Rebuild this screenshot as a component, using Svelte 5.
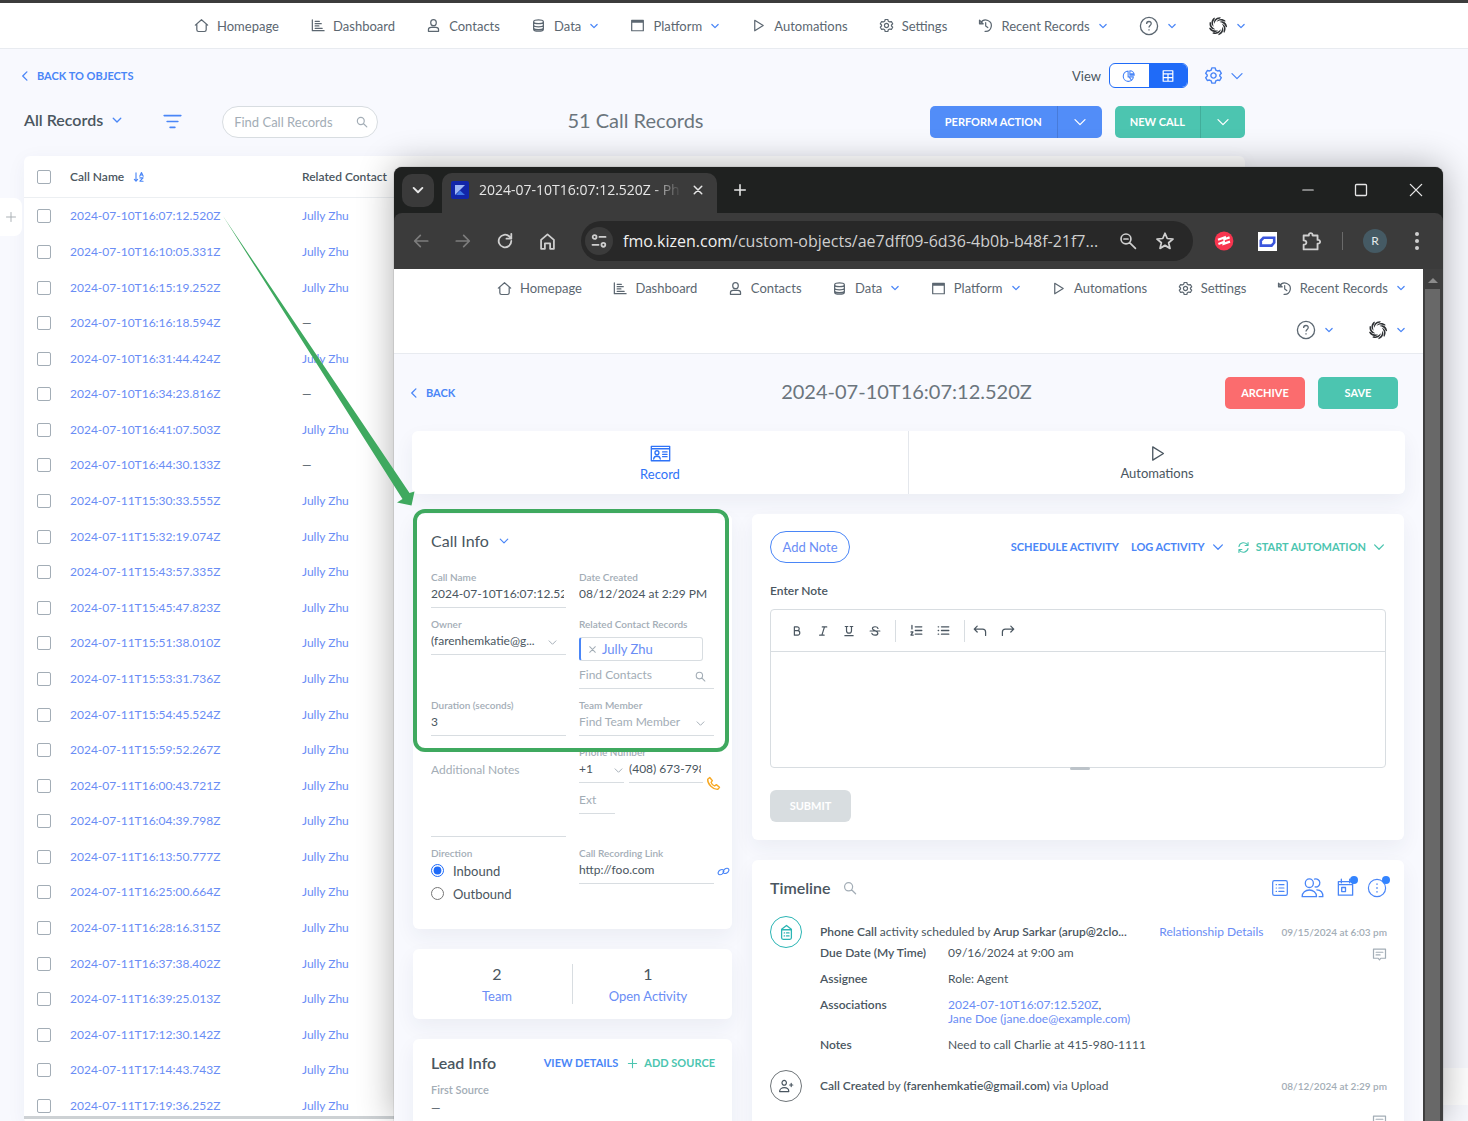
<!--
  @component CallRecords
  Call records list with the record detail opened in a separate browser
  window on top of it, plus the callout that links the two.
-->
<script lang="ts">
  type NavItem = { label: string; icon: string; menu?: boolean };

  const navItems: NavItem[] = [
    { label: 'Homepage', icon: 'home' },
    { label: 'Dashboard', icon: 'chart' },
    { label: 'Contacts', icon: 'person' },
    { label: 'Data', icon: 'data', menu: true },
    { label: 'Platform', icon: 'panel', menu: true },
    { label: 'Automations', icon: 'play' },
    { label: 'Settings', icon: 'gear' },
    { label: 'Recent Records', icon: 'history', menu: true }
  ];

  const contact = 'Jully Zhu';
  const records: [string, string][] = [
    ['2024-07-10T16:07:12.520Z', contact],
    ['2024-07-10T16:10:05.331Z', contact],
    ['2024-07-10T16:15:19.252Z', contact],
    ['2024-07-10T16:16:18.594Z', ''],
    ['2024-07-10T16:31:44.424Z', contact],
    ['2024-07-10T16:34:23.816Z', ''],
    ['2024-07-10T16:41:07.503Z', contact],
    ['2024-07-10T16:44:30.133Z', ''],
    ['2024-07-11T15:30:33.555Z', contact],
    ['2024-07-11T15:32:19.074Z', contact],
    ['2024-07-11T15:43:57.335Z', contact],
    ['2024-07-11T15:45:47.823Z', contact],
    ['2024-07-11T15:51:38.010Z', contact],
    ['2024-07-11T15:53:31.736Z', contact],
    ['2024-07-11T15:54:45.524Z', contact],
    ['2024-07-11T15:59:52.267Z', contact],
    ['2024-07-11T16:00:43.721Z', contact],
    ['2024-07-11T16:04:39.798Z', contact],
    ['2024-07-11T16:13:50.777Z', contact],
    ['2024-07-11T16:25:00.664Z', contact],
    ['2024-07-11T16:28:16.315Z', contact],
    ['2024-07-11T16:37:38.402Z', contact],
    ['2024-07-11T16:39:25.013Z', contact],
    ['2024-07-11T17:12:30.142Z', contact],
    ['2024-07-11T17:14:43.743Z', contact],
    ['2024-07-11T17:19:36.252Z', contact]
  ];

  // Stroke paths on a 16x16 grid
  const icons: Record<string, string> = {
    home: 'M1.4 7.6 8 1.8 14.6 7.6M3 6.6V12.6Q3 14.4 4.8 14.4H11.2Q13 14.4 13 12.6V6.6',
    chart: 'M2.5 2V13.5H15M5.5 3.5H10M5.5 6H12M5.5 8.5H9.5M5.5 11H13',
    person: 'M8 1.8A2.6 2.8 0 0 1 8 8.2 2.6 2.8 0 0 1 8 1.8ZM2.6 14.2V12.4C2.6 10.8 4 10 5.4 10H10.6C12 10 13.4 10.8 13.4 12.4V14.2Z',
    data: 'M2.8 4C2.8 1.4 13.2 1.4 13.2 4V12C13.2 14.8 2.8 14.8 2.8 12ZM2.8 4.6C4 6.6 12 6.6 13.2 4.6M2.8 8C4 10 12 10 13.2 8M2.8 11C4 12.8 12 12.8 13.2 11',
    panel: 'M1.8 2.6H14.2V13.6H1.8ZM1.8 3.4H14.2M1.8 4.4H14.2',
    play: 'M4 2.4 13 8 4 13.6Z',
    gear: 'M6.6 1.6H9.4L9.9 3.4 11.4 4.2 13.2 3.8 14.6 6.2 13.3 7.5V8.5L14.6 9.8 13.2 12.2 11.4 11.8 9.9 12.6 9.4 14.4H6.6L6.1 12.6 4.6 11.8 2.8 12.2 1.4 9.8 2.7 8.5V7.5L1.4 6.2 2.8 3.8 4.6 4.2 6.1 3.4ZM10.2 8A2.2 2.2 0 1 1 5.8 8 2.2 2.2 0 1 1 10.2 8Z',
    history: 'M1.6 2.2V6.2H5.6ZM3 5.2A6 6 0 1 1 7.5 14.2M8.2 5V8.6L10.4 10.2',
    down: 'M3 5.6 8 10.6 13 5.6',
    back: 'M10.5 2.5 5 8 10.5 13.5',
    search: 'M11 6.6A4.6 4.8 0 1 1 1.8 6.6 4.6 4.8 0 1 1 11 6.6ZM9.8 10 14.4 14.6',
    zoomOut: 'M10.6 6.2A4.4 4.4 0 1 1 1.8 6.2 4.4 4.4 0 1 1 10.6 6.2ZM9.4 9.4 14.6 14.6M4.4 6.2H8',
    left: 'M14 8H2.4M7.4 3 2.4 8 7.4 13',
    right: 'M2 8H13.6M8.6 3 13.6 8 8.6 13',
    reload: 'M13.6 8A5.6 5.6 0 1 1 11.9 4L13.6 5.8M13.6 1.6V5.9H9.3',
    house: 'M2.6 6.6 8 2 13.4 6.6V14.2H10.2V9.6H5.8V14.2H2.6Z',
    star: 'M8 1.8 9.8 6 14.4 6.4 10.9 9.4 12 13.9 8 11.5 4 13.9 5.1 9.4 1.6 6.4 6.2 6Z',
    puzzle: 'M2 3.4H6C5.6 1 9.2 1 8.8 3.4H12.6V6.8C15.2 6.4 15.2 10 12.6 9.6V14H2V10.4C4.8 10.6 4.8 7 2 7.2Z',
    tune: 'M5.8 4.4A1.7 1.7 0 1 1 2.4 4.4 1.7 1.7 0 1 1 5.8 4.4ZM8.4 4.4H13.8M13.6 11.4A1.7 1.7 0 1 1 10.2 11.4 1.7 1.7 0 1 1 13.6 11.4ZM2.2 11.4H7.6',
    close: 'M3 3 13 13M13 3 3 13',
    plus: 'M8 2V14M2 8H14',
    minimise: 'M2 8H14',
    maximise: 'M3.5 2.5H12.5Q13.5 2.5 13.5 3.5V12.5Q13.5 13.5 12.5 13.5H3.5Q2.5 13.5 2.5 12.5V3.5Q2.5 2.5 3.5 2.5Z',
    filter: 'M1 3H15M3.5 8H12.5M6 13H10',
    grid: 'M2.5 2H13.5V14H2.5ZM2.5 5.6H13.5M2.5 9.8H13.5M8 5.6V14',
    pie: 'M7 2.5A5.8 5.8 0 1 0 13 9H7ZM9 2V7H14A5 5 0 0 0 9 2ZM8 9 11 13M10 5.5H13',
    sort: 'M4 2.5V13.5M1.8 11.2 4 13.6 6.2 11.2M9 7 11.3 2 13.6 7M9.8 5.4H12.8M9.2 9.2H13.4L9.2 13.6H13.4',
    refresh: 'M2.4 6.8A5.8 5.8 0 0 1 13.2 5.2M13.6 2V5.6H10M13.6 9.2A5.8 5.8 0 0 1 2.8 10.8M2.4 14V10.4H6',
    card: 'M1 2.5H15V13.5H1ZM1 4.4H15M6.8 7.4A1.5 1.5 0 1 1 3.8 7.4 1.5 1.5 0 1 1 6.8 7.4ZM2.8 12.2C3 9.4 7.6 9.4 7.8 12.2M9.6 6.8H13M9.6 8.6H13M9.6 10.4H13',
    bold: 'M4.5 2.5H8.5C11.8 2.5 11.8 7.6 8.5 7.6H4.5ZM4.5 7.6H9C12.6 7.6 12.6 13.5 9 13.5H4.5Z',
    italic: 'M7 2.5H13M3.5 13.5H9.5M10 2.5 6.5 13.5',
    underline: 'M3 2H6.5M9.5 2H13M4.7 2V7.5C4.7 12 11.3 12 11.3 7.5V2M2.5 14.2H13.5',
    strike: 'M12 4.6C11 1.4 4.4 1.6 4.6 5 4.8 7.6 11.8 7.4 11.8 10.8 11.6 14.6 4.4 14.4 3.8 11M1.5 8H14.5',
    ordered: 'M6.5 3.5H14.5M6.5 8H14.5M6.5 12.5H14.5M2.4 1.8V6M1.2 9.8H3.6L1.2 13.6H4',
    bullets: 'M5.5 3.5H14.5M5.5 8H14.5M5.5 12.5H14.5M1.5 3.5H2M1.5 8H2M1.5 12.5H2',
    undo: 'M4.8 2.4 1.4 5.8 4.8 9.2M1.4 5.8H11Q14.4 5.8 14.4 9.2V13',
    redo: 'M11.2 2.4 14.6 5.8 11.2 9.2M14.6 5.8H5Q1.6 5.8 1.6 9.2V13',
    phone: 'M1.8 3.4 4 1.6 6.8 5 5.4 6.8C6 8.6 7.4 10 9.2 10.6L11 9.2 14.4 12 12.6 14.2C7.6 14.6 1.4 8.4 1.8 3.4Z',
    link: 'M7.4 9.8C5.6 13 .8 12.6 1.4 9.4 2 6.6 5.4 4.8 7.4 5.8 9 6.8 8.6 8.6 7.6 9.6M8.6 6.2C10.4 3 15.2 3.4 14.6 6.6 14 9.4 10.6 11.2 8.6 10.2 7 9.2 7.4 7.4 8.4 6.4',
    list: 'M3 1.5H13Q14.5 1.5 14.5 3V13Q14.5 14.5 13 14.5H3Q1.5 14.5 1.5 13V3Q1.5 1.5 3 1.5ZM4.6 5H4.9M7 5H11.5M4.6 8H4.9M7 8H11.5M4.6 11H4.9M7 11H11.5',
    people: 'M8.6 5A2.8 3 0 1 1 3 5 2.8 3 0 1 1 8.6 5ZM.8 14.4C.6 8.2 11 8.2 10.8 14.4ZM9.4 2.2A2.8 2.8 0 1 1 9.8 7.6M11 9.6C13.8 9.6 15.4 11.6 15.2 14.4H12.6',
    calendar: 'M2 3H14V14.5H2ZM2 5.6H14M4.5 1V4M11.5 1V4M4.8 8H8V11.4H4.8Z',
    clipboard: 'M3.4 5 8 1.4 12.6 5V13Q12.6 14.4 11.2 14.4H4.8Q3.4 14.4 3.4 13ZM3.6 5.4H12.4M5.8 8.4H6.2M8 8.4H10.4M5.8 11.2H6.2M8 11.2H10.4',
    comment: 'M1.6 2.2H14.4V12H9.4L8 13.8 6.6 12H1.6ZM4.4 5.6H11.6M4.4 8.4H8.6',
    addPerson: 'M8.4 4.8A2.2 2.4 0 1 1 4 4.8 2.2 2.4 0 1 1 8.4 4.8ZM1.6 13.6C1.6 8.4 10.8 8.4 10.8 13.6ZM13.2 5.4V8.6M11.6 7H14.8'
  };

  const actions = ['bold', 'italic', 'underline', 'strike'];
  const blades = [0, 40, 80, 120, 160, 200, 240, 280, 320];
</script>

{#snippet icon(name: string, size = 16, weight = 1.3)}
  <svg
    class="icon"
    width={size}
    height={size}
    viewBox="0 0 16 16"
    fill="none"
    stroke="currentColor"
    stroke-width={weight}
    stroke-linecap="round"
    stroke-linejoin="round"
    aria-hidden="true"
  >
    <path d={icons[name]} />
  </svg>
{/snippet}

{#snippet swirl()}
  <svg class="icon" width="20" height="20" viewBox="-10 -10 20 20" aria-hidden="true">
    {#each blades as angle}
      <path
        d="M-3.8 -2.2C-4.8 -5.6 -2 -9.2 2.6 -8.8 2.8 -8 2.2 -7.4 1.2 -7.2 -1.2 -6.8 -2.6 -5 -3.8 -2.2Z"
        fill="#2f3235"
        transform="rotate({angle})"
      />
    {/each}
  </svg>
{/snippet}

{#snippet help()}
  <button class="nav-item" aria-label="Help">
    <svg class="icon" width="20" height="20" viewBox="0 0 20 20" fill="none" stroke="currentColor" stroke-width="1.3">
      <circle cx="10" cy="10" r="8.6" />
      <path d="M7.6 8C7.6 4.6 12.4 4.8 12.2 7.8 12 9.6 10 9.6 10 11.6M10 13.2V14.6" />
    </svg>
    <span class="blue">{@render icon('down', 10, 2)}</span>
  </button>
{/snippet}

{#snippet account()}
  <button class="nav-item" aria-label="Account">
    {@render swirl()}
    <span class="blue">{@render icon('down', 10, 2)}</span>
  </button>
{/snippet}

{#snippet navLinks()}
  {#each navItems as item}
    <a class="nav-item" href="#{item.icon}">
      {@render icon(item.icon, 15, 1.3)}
      <span>{item.label}</span>
      {#if item.menu}
        <span class="blue">{@render icon('down', 10, 2)}</span>
      {/if}
    </a>
  {/each}
{/snippet}

<div class="desktop">
  <!-- List page -->
  <nav class="main-nav" aria-label="Main">
    {@render navLinks()}
    {@render help()}
    {@render account()}
  </nav>

  <main class="list-page">
    <div class="crumb-row">
      <a class="caps blue" href="#objects">{@render icon('back', 12, 1.8)}BACK TO OBJECTS</a>
      <div class="view-tools">
        <span class="view-label">View</span>
        <div class="toggle">
          <button aria-label="Chart view">{@render icon('pie', 14)}</button>
          <button class="on" aria-label="Table view">{@render icon('grid', 14, 1.4)}</button>
        </div>
        <button class="blue settings" aria-label="List settings">
          {@render icon('gear', 19, 1.2)}
          {@render icon('down', 16)}
        </button>
      </div>
    </div>

    <div class="filter-row">
      <button class="scope">All Records <span class="blue">{@render icon('down', 12, 1.8)}</span></button>
      <button class="blue filter" aria-label="Filter">{@render icon('filter', 19, 1.4)}</button>
      <div class="pill-search">
        <input type="text" placeholder="Find Call Records" aria-label="Find Call Records" />
        {@render icon('search', 12, 1.6)}
      </div>
      <h1>51 Call Records</h1>
      <div class="split primary">
        <button class="caps">PERFORM ACTION</button>
        <button aria-label="More actions">{@render icon('down', 16)}</button>
      </div>
      <div class="split success">
        <button class="caps">NEW CALL</button>
        <button aria-label="More call options">{@render icon('down', 16)}</button>
      </div>
    </div>

    <div class="table-card">
      <table>
        <thead>
          <tr>
            <th class="tick"><input type="checkbox" aria-label="Select all" /></th>
            <th class="name">Call Name <span class="blue">{@render icon('sort', 12, 1.5)}</span></th>
            <th>Related Contact</th>
          </tr>
        </thead>
        <tbody>
          {#each records as [name, related]}
            <tr>
              <td class="tick"><input type="checkbox" aria-label="Select {name}" /></td>
              <td><a href="#record">{name}</a></td>
              <td>{#if related}<a href="#contact">{related}</a>{:else}—{/if}</td>
            </tr>
          {/each}
        </tbody>
      </table>
    </div>
  </main>
  <button class="side-tab" aria-label="Expand panel">{@render icon('plus', 12)}</button>
  <div class="side-chip"></div>
  <div class="h-scroll"></div>

  <!-- Record window -->
  <section class="window" aria-label="Record window">
    <div class="tab-strip">
      <button class="tab-search" aria-label="Search tabs">{@render icon('down', 14, 2.2)}</button>
      <div class="tab">
        <svg class="icon" width="18" height="18" viewBox="0 0 18 18" aria-hidden="true">
          <rect width="18" height="18" rx="2" fill="#1226a8" />
          <path d="M4 4V14L14 4Z" fill="#9db6f5" />
          <path d="M9 9.5 14 14H5Z" fill="#3f79e6" />
        </svg>
        <span class="tab-title">2024-07-10T16:07:12.520Z - Ph</span>
        <button aria-label="Close tab">{@render icon('close', 12, 2)}</button>
      </div>
      <button class="new-tab" aria-label="New tab">{@render icon('plus', 14, 1.8)}</button>
      <div class="window-controls">
        <button aria-label="Minimise">{@render icon('minimise', 14)}</button>
        <button aria-label="Maximise">{@render icon('maximise', 16)}</button>
        <button aria-label="Close window">{@render icon('close', 18, 1.2)}</button>
      </div>
    </div>

    <div class="toolbar">
      <button class="dim" aria-label="Back">{@render icon('left', 18, 1.5)}</button>
      <button class="dim" aria-label="Forward">{@render icon('right', 18, 1.5)}</button>
      <button aria-label="Reload">{@render icon('reload', 18, 1.6)}</button>
      <button aria-label="Home">{@render icon('house', 19, 1.5)}</button>
      <div class="address">
        <button class="site-info" aria-label="Site information">{@render icon('tune', 18, 1.6)}</button>
        <span class="url"><b>fmo.kizen.com</b>/custom-objects/ae7dff09-6d36-4b0b-b48f-21f7...</span>
        <button aria-label="Zoom">{@render icon('zoomOut', 18, 1.5)}</button>
        <button aria-label="Bookmark">{@render icon('star', 20, 1.4)}</button>
      </div>
      <svg class="icon" width="20" height="20" viewBox="0 0 20 20" aria-hidden="true">
        <circle cx="10" cy="10" r="9.4" fill="#f8354f" />
        <path d="M4 8.8 10.6 6.4 10.4 8.2 15.6 6.4M4.4 13 9.8 11 9.6 12.8 16 10.6" fill="none" stroke="#fff" stroke-width="2.2" />
      </svg>
      <svg class="icon" width="19" height="19" viewBox="0 0 19 19" aria-hidden="true">
        <rect width="19" height="19" fill="#fff" />
        <path d="M5.4 5.8H16.2V10.6L13.6 13.6H2.8V8.6Z" fill="none" stroke="#3a55dc" stroke-width="2.6" />
      </svg>
      <button aria-label="Extensions">{@render icon('puzzle', 21, 1.4)}</button>
      <span class="divider"></span>
      <button class="avatar" aria-label="Profile">R</button>
      <button class="kebab" aria-label="Browser menu">
        <svg class="icon" width="4" height="18" viewBox="0 0 4 18" fill="currentColor">
          <circle cx="2" cy="2" r="2" /><circle cx="2" cy="9" r="2" /><circle cx="2" cy="16" r="2" />
        </svg>
      </button>
    </div>

    <div class="viewport">
      <div class="page">
        <nav class="record-nav" aria-label="Record">
          <div class="nav-row">{@render navLinks()}</div>
          <div class="nav-row end">
            {@render help()}
            {@render account()}
          </div>
        </nav>

        <div class="record">
          <div class="record-head">
            <a class="caps blue" href="#back">{@render icon('back', 12, 1.8)}BACK</a>
            <h2>2024-07-10T16:07:12.520Z</h2>
            <div class="record-actions">
              <button class="caps archive">ARCHIVE</button>
              <button class="caps save">SAVE</button>
            </div>
          </div>

          <div class="record-tabs">
            <button class="active">{@render icon('card', 21, 1)}Record</button>
            <button>{@render icon('play', 19, 1.1)}Automations</button>
          </div>

          <div class="columns">
            <div class="column">
              <section class="card info">
                <h3>Call Info <span class="blue">{@render icon('down', 12, 1.6)}</span></h3>
                <div class="fields">
                  <label class="field">
                    <span>Call Name</span>
                    <input type="text" value="2024-07-10T16:07:12.520Z" />
                  </label>
                  <label class="field plain">
                    <span>Date Created</span>
                    <input type="text" value="08/12/2024 at 2:29 PM" readonly />
                  </label>
                  <label class="field">
                    <span>Owner</span>
                    <div class="control">
                      <select><option>(farenhemkatie@g...</option></select>
                      {@render icon('down', 11, 1.4)}
                    </div>
                  </label>
                  <div class="field">
                    <label for="contacts">Related Contact Records</label>
                    <div class="chip">
                      <button aria-label="Remove Jully Zhu">{@render icon('close', 9, 1.8)}</button>
                      Jully Zhu
                    </div>
                    <div class="control">
                      <input id="contacts" type="text" placeholder="Find Contacts" />
                      {@render icon('search', 11, 1.6)}
                    </div>
                  </div>
                  <label class="field">
                    <span>Duration (seconds)</span>
                    <input type="text" value="3" />
                  </label>
                  <label class="field">
                    <span>Team Member</span>
                    <div class="control">
                      <input type="text" placeholder="Find Team Member" />
                      {@render icon('down', 11, 1.4)}
                    </div>
                  </label>
                  <div class="field notes">
                    <textarea placeholder="Additional Notes" aria-label="Additional Notes"></textarea>
                  </div>
                  <div class="field phone-field">
                    <label for="phone">Phone Number</label>
                    <div class="phone">
                      <div class="control code">
                        <select aria-label="Country code"><option>+1</option></select>
                        {@render icon('down', 11, 1.4)}
                      </div>
                      <input id="phone" type="text" value="(408) 673-7984" />
                      <button class="call" aria-label="Call">{@render icon('phone', 15, 1.5)}</button>
                    </div>
                    <input class="ext" type="text" placeholder="Ext" aria-label="Extension" />
                  </div>
                  <fieldset class="field">
                    <legend>Direction</legend>
                    <div class="radios">
                      <label><input type="radio" name="direction" checked />Inbound</label>
                      <label><input type="radio" name="direction" />Outbound</label>
                    </div>
                  </fieldset>
                  <div class="field">
                    <label for="recording">Call Recording Link</label>
                    <div class="link-row">
                      <input id="recording" type="text" value="http://foo.com" />
                      <a class="open-link" href="#recording" aria-label="Open recording">{@render icon('link', 13, 1.4)}</a>
                    </div>
                  </div>
                </div>
              </section>

              <section class="card stats">
                <a href="#team"><b>2</b>Team</a>
                <a href="#activity"><b>1</b>Open Activity</a>
              </section>

              <section class="card lead">
                <div class="lead-head">
                  <h3>Lead Info</h3>
                  <a class="caps blue" href="#details">VIEW DETAILS</a>
                  <a class="caps green" href="#source">{@render icon('plus', 11, 1.6)}ADD SOURCE</a>
                </div>
                <span class="small-label">First Source</span>
                <span>—</span>
              </section>
            </div>

            <div class="column">
              <section class="card note">
                <div class="note-head">
                  <button class="add-note">Add Note</button>
                  <button class="caps blue">SCHEDULE ACTIVITY</button>
                  <button class="caps blue">LOG ACTIVITY {@render icon('down', 14, 1.5)}</button>
                  <button class="caps green">{@render icon('refresh', 13, 1.4)} START AUTOMATION {@render icon('down', 14, 1.5)}</button>
                </div>
                <label class="note-label" for="note">Enter Note</label>
                <div class="editor">
                  <div class="format-bar">
                    {#each actions as action}
                      <button aria-label={action}>{@render icon(action, 12, 1.6)}</button>
                    {/each}
                    <span class="rule"></span>
                    <button aria-label="Ordered list">{@render icon('ordered', 13, 1.6)}</button>
                    <button aria-label="Bulleted list">{@render icon('bullets', 13, 1.6)}</button>
                    <span class="rule history"></span>
                    <button aria-label="Undo">{@render icon('undo', 14, 1.4)}</button>
                    <button aria-label="Redo">{@render icon('redo', 14, 1.4)}</button>
                  </div>
                  <textarea id="note"></textarea>
                  <span class="grip"></span>
                </div>
                <button class="caps submit" disabled>SUBMIT</button>
              </section>

              <section class="card timeline">
                <div class="timeline-head">
                  <h3>Timeline</h3>
                  <button class="muted find" aria-label="Search timeline">{@render icon('search', 14, 1.4)}</button>
                  <button aria-label="List">{@render icon('list', 18, 1.1)}</button>
                  <button aria-label="People">{@render icon('people', 23, 0.9)}</button>
                  <button class="dot" aria-label="Dates">{@render icon('calendar', 19, 1.1)}</button>
                  <button class="dot" aria-label="More">
                    <svg class="icon" width="20" height="20" viewBox="0 0 20 20" fill="none" stroke="currentColor" stroke-width="1.2">
                      <circle cx="10" cy="10" r="8.6" />
                      <path d="M10 5.4V6.8M10 9.3V10.7M10 13.2V14.6" stroke-width="1.5" />
                    </svg>
                  </button>
                </div>

                <article class="event">
                  <span class="badge teal">{@render icon('clipboard', 17, 1.2)}</span>
                  <div class="event-body">
                    <div class="event-title">
                      <p><b>Phone Call</b> activity scheduled by <b>Arup Sarkar (arup@2clo...</b></p>
                      <a href="#relationship">Relationship Details</a>
                      <time>09/15/2024 at 6:03 pm</time>
                    </div>
                    <dl>
                      <dt>Due Date (My Time)</dt>
                      <dd>09/16/2024 at 9:00 am</dd>
                      <dt>Assignee</dt>
                      <dd>Role: Agent</dd>
                      <dt>Associations</dt>
                      <dd><a href="#record">2024-07-10T16:07:12.520Z</a>,<br /><a href="#jane">Jane Doe (jane.doe@example.com)</a></dd>
                      <dt>Notes</dt>
                      <dd>Need to call Charlie at 415-980-1111</dd>
                    </dl>
                    <button class="muted comment" aria-label="Comment">{@render icon('comment', 15, 1.3)}</button>
                  </div>
                </article>

                <article class="event">
                  <span class="badge">{@render icon('addPerson', 16, 1.2)}</span>
                  <div class="event-body">
                    <div class="event-title">
                      <p><b>Call Created</b> by <b>(farenhemkatie@gmail.com)</b> via Upload</p>
                      <time>08/12/2024 at 2:29 pm</time>
                    </div>
                    <button class="muted comment late" aria-label="Comment">{@render icon('comment', 15, 1.3)}</button>
                  </div>
                </article>
              </section>
            </div>
          </div>
        </div>
      </div>
      <div class="scrollbar"><i></i></div>
    </div>
  </section>

  <!-- Callout from the row to the record -->
  <svg class="arrow" width="200" height="300" viewBox="0 0 200 300" aria-hidden="true">
    <path d="M0 0 186.5 277 191.5 275.5 188.5 289.5 174 286.5 179.5 283Z" fill="#3fa95f" />
  </svg>
  <div class="highlight"></div>
</div>

<style>
  :global(body) {
    background: #f8f9fe;
  }

  .desktop {
    --blue: #4a86f7;
    --link: #6a8df5;
    --green: #4cc5b0;
    --text: #4a5660;
    --muted: #a3adb6;
    --line: #d8dde1;
    position: relative;
    height: 100vh;
    overflow: hidden;
    box-sizing: border-box;
    border-top: 3px solid #3c3c3c;
    background: #f8f9fe;
    color: var(--text);
    font: 12px/16px Lato, sans-serif;
  }

  .desktop :is(button, input, select, textarea) {
    font: inherit;
    color: inherit;
    box-sizing: border-box;
  }

  .desktop button {
    padding: 0;
    border: 0;
    background: none;
    display: flex;
    align-items: center;
    justify-content: center;
  }

  .desktop :is(h1, h2, h3, p, dl, dd) {
    margin: 0;
    font-weight: 400;
  }

  .icon {
    display: block;
    flex: none;
  }

  a {
    color: var(--link);
    text-decoration: none;
  }

  .desktop .blue {
    color: var(--blue);
  }

  .desktop .green {
    color: var(--green);
  }

  .desktop .muted {
    color: var(--muted);
  }

  .desktop .caps {
    display: flex;
    align-items: center;
    gap: 6px;
    font-size: 11px;
    font-weight: 700;
  }

  input::placeholder,
  textarea::placeholder {
    color: var(--muted);
    opacity: 1;
  }

  input[type='checkbox'] {
    appearance: none;
    display: block;
    width: 14px;
    height: 14px;
    margin: 0;
    border: 1px solid #a3adb6;
    border-radius: 2px;
    background: #fff;
  }

  /* Navigation */
  .main-nav {
    display: flex;
    align-items: center;
    justify-content: space-between;
    height: 46px;
    box-sizing: border-box;
    padding: 0 222px 0 194px;
    border-bottom: 1px solid #e8ebf0;
    background: #fff;
  }

  .desktop .nav-item {
    display: flex;
    align-items: center;
    gap: 8px;
    color: #5c6771;
    font-size: 13px;
    white-space: nowrap;
  }

  /* List page */
  .list-page {
    padding: 0 223px 0 24px;
  }

  .crumb-row {
    display: flex;
    align-items: center;
    justify-content: space-between;
    height: 53px;
    margin-left: -5px;
  }

  .view-tools {
    display: flex;
    align-items: center;
    gap: 8px;
  }

  .view-label {
    font-size: 13px;
  }

  .toggle {
    display: flex;
    overflow: hidden;
    box-sizing: border-box;
    width: 79px;
    height: 25px;
    border: 1px solid #1f6bf8;
    border-radius: 6px;
    background: #fff;
  }

  .toggle button {
    flex: 1;
    color: var(--blue);
  }

  .desktop .toggle .on {
    background: #1f6bf8;
    color: #fff;
  }

  .desktop .settings {
    gap: 6px;
    margin-left: 8px;
  }

  .filter-row {
    display: flex;
    align-items: center;
    height: 39px;
    margin-bottom: 15px;
  }

  .desktop .scope {
    gap: 8px;
    padding-bottom: 4px;
    font-size: 16px;
    font-weight: 600;
  }

  .desktop .filter {
    margin: 0 40px 0 40px;
  }

  .pill-search {
    display: flex;
    align-items: center;
    width: 156px;
    height: 32px;
    box-sizing: border-box;
    padding: 0 9px 0 11px;
    border: 1px solid var(--line);
    border-radius: 16px;
    background: #fff;
    color: var(--muted);
  }

  .pill-search input {
    flex: 1;
    min-width: 0;
    padding: 0;
    border: 0;
    font-size: 13px;
  }

  h1 {
    flex: 1;
    padding: 0 24px 4px 0;
    font-size: 20px;
    line-height: 26px;
    text-align: center;
    color: #6b757d;
  }

  .split {
    display: flex;
    height: 32px;
    margin-left: 13px;
    border-radius: 5px;
    color: #fff;
  }

  .desktop .split button:first-child {
    padding: 0 15px;
    border-right: 1px solid rgb(0 0 0 / 12%);
  }

  .split button:last-child {
    width: 44px;
  }

  .primary {
    background: #528df8;
  }

  .success {
    background: var(--green);
  }

  .table-card {
    height: calc(100vh - 153px);
    border-radius: 6px;
    background: #fff;
    box-shadow: 0 4px 20px rgb(40 50 90 / 5%);
  }

  table {
    height: 100%;
    border-collapse: collapse;
    font-size: 12px;
  }

  th {
    height: 41px;
    font-weight: 600;
    text-align: left;
    border-bottom: 1px solid #eceff2;
  }

  th,
  td {
    padding: 0;
    min-width: 160px;
  }

  .desktop .tick {
    min-width: 33px;
    padding-left: 13px;
  }

  .name {
    width: 232px;
  }

  .name span {
    display: inline-block;
    margin-left: 6px;
    vertical-align: middle;
  }

  .desktop .side-tab {
    position: absolute;
    top: 195px;
    left: 0;
    width: 22px;
    height: 38px;
    border-radius: 0 8px 8px 0;
    background: #fff;
    color: #a9afb4;
  }

  .side-chip {
    position: absolute;
    right: 0;
    bottom: 16px;
    width: 25px;
    height: 37px;
    background: #fff;
  }

  .h-scroll {
    position: absolute;
    bottom: 2px;
    left: 24px;
    width: 500px;
    height: 3px;
    background: #cdd1d4;
  }

  /* Window */
  .window {
    position: absolute;
    top: 164px;
    right: 25px;
    bottom: 0;
    left: 394px;
    display: flex;
    flex-direction: column;
    border-radius: 8px 8px 0 0;
    background: #1f2120;
    box-shadow: 0 0 36px rgb(0 0 0 / 32%), 0 0 1px #555;
  }

  .tab-strip {
    display: flex;
    align-items: center;
    height: 46px;
    padding: 0 8px;
    color: #e6e6e6;
  }

  .desktop .tab-search {
    width: 32px;
    height: 33px;
    border-radius: 10px;
    background: #3a3a3a;
  }

  .tab {
    display: flex;
    align-items: center;
    align-self: flex-end;
    gap: 10px;
    width: 275px;
    height: 40px;
    box-sizing: border-box;
    margin-left: 8px;
    padding: 0 13px 6px 9px;
    border-radius: 10px 10px 0 0;
    background: #3b3b3b;
  }

  .tab-title {
    flex: 1;
    font: 14px/18px 'Open Sans', sans-serif;
    white-space: nowrap;
    mask-image: linear-gradient(to right, #000 85%, transparent);
  }

  .desktop .new-tab {
    margin-left: 16px;
  }

  .window-controls {
    display: flex;
    gap: 38px;
    margin-left: auto;
    padding-right: 10px;
  }

  .toolbar {
    display: flex;
    align-items: center;
    gap: 24px;
    height: 56px;
    box-sizing: border-box;
    padding: 0 24px 0 18px;
    background: #3b3b3b;
    border-radius: 8px 8px 0 0;
    color: #cfcfcf;
  }

  .desktop .dim {
    color: #7d7d7d;
  }

  .address {
    display: flex;
    align-items: center;
    flex: 1;
    gap: 18px;
    min-width: 0;
    height: 40px;
    margin-right: -3px;
    padding: 0 18px 0 4px;
    border-radius: 20px;
    background: #282828;
  }

  .desktop .site-info {
    width: 28px;
    height: 28px;
    margin-right: -8px;
    border-radius: 50%;
    background: #3b3b3b;
  }

  .url {
    flex: 1;
    font: 16px/20px 'Open Sans', sans-serif;
    white-space: nowrap;
  }

  .url b {
    color: #f0f0f0;
    font-weight: 400;
  }

  .divider {
    width: 1px;
    height: 18px;
    margin: 0 -4px;
    background: #6a6a6a;
  }

  .desktop .avatar {
    width: 24px;
    height: 24px;
    margin-right: 4px;
    border-radius: 50%;
    background: #455a64;
    color: #e4e9eb;
    font-size: 12px;
  }

  .viewport {
    display: flex;
    flex: 1;
    min-height: 0;
  }

  .page {
    flex: 1;
    overflow: hidden;
    background: #f8f9fe;
  }

  .scrollbar {
    position: relative;
    width: 20px;
    padding: 20px 3px 0 2px;
    box-sizing: border-box;
    background: #3f3f3f;
  }

  .scrollbar::before {
    content: '';
    position: absolute;
    top: 9px;
    left: 5px;
    border: 5px solid transparent;
    border-top: 0;
    border-bottom-color: #8c8c8c;
  }

  .scrollbar i {
    display: block;
    height: 100%;
    background: #686868;
  }

  .record-nav {
    height: 84px;
    border-bottom: 1px solid #e8ebf0;
    background: #fff;
  }

  .nav-row {
    display: flex;
    align-items: center;
    justify-content: space-between;
    height: 38px;
    padding: 0 17px 0 103px;
  }

  .end {
    justify-content: flex-end;
    gap: 34px;
    height: 46px;
  }

  /* Record page */
  .record {
    padding: 0 18px;
  }

  .record-head {
    display: grid;
    grid-template-columns: 1fr auto 1fr;
    align-items: center;
    height: 77px;
    margin-left: -4px;
  }

  h2 {
    padding-bottom: 4px;
    font-size: 20px;
    line-height: 26px;
    color: #6b757d;
  }

  .record-actions {
    display: flex;
    justify-content: flex-end;
    gap: 13px;
    padding-right: 7px;
  }

  .record-actions button {
    width: 80px;
    height: 32px;
    border-radius: 5px;
    color: #fff;
  }

  .desktop .archive {
    background: #fb6c6e;
  }

  .desktop .save {
    background: var(--green);
  }

  .record-tabs {
    display: flex;
    height: 63px;
    border-radius: 6px;
    background: #fff;
    box-shadow: 0 8px 20px rgb(40 50 90 / 6%);
  }

  .record-tabs button {
    flex: 1;
    flex-direction: column;
    gap: 2px;
    font-size: 13px;
  }

  .desktop .record-tabs button + button {
    border-left: 1px solid #e4e7ec;
  }

  .desktop .record-tabs .active {
    color: #2f73f7;
  }

  .columns {
    display: grid;
    grid-template-columns: 319px 1fr;
    gap: 20px;
    margin: 20px 1px 0;
  }

  .column {
    display: flex;
    flex-direction: column;
    gap: 20px;
    min-width: 0;
  }

  .card {
    border-radius: 6px;
    background: #fff;
    box-shadow: 0 8px 20px rgb(40 50 90 / 6%);
  }

  h3 {
    display: flex;
    align-items: center;
    gap: 9px;
    font-size: 16px;
    line-height: 20px;
  }

  .info {
    padding: 17px 18px 24px;
  }

  .fields {
    display: grid;
    grid-template-columns: 135px 135px;
    gap: 10px 13px;
    margin-top: 20px;
  }

  .field {
    display: flex;
    flex-direction: column;
    min-width: 0;
    margin: 0;
    padding: 0;
    border: 0;
    font-size: 12px;
  }

  .field > span,
  .field > label,
  .field > legend,
  .small-label {
    height: 12px;
    padding: 0;
    color: var(--muted);
    font-size: 10px;
    line-height: 12px;
    font-weight: 600;
  }

  .field :is(input:not([type='radio']), select, textarea) {
    display: block;
    width: 100%;
    height: 25px;
    padding: 0 2px 3px 0;
    border: 0;
    border-bottom: 1px solid var(--line);
    border-radius: 0;
    background: none;
    appearance: none;
  }

  .plain input:not([type='radio']) {
    border-color: transparent;
    padding-right: 0;
  }

  .control {
    position: relative;
    color: var(--muted);
  }

  .control select {
    color: var(--text);
  }

  .control .icon {
    position: absolute;
    top: 7px;
    right: 8px;
  }

  .chip {
    display: flex;
    align-items: center;
    gap: 5px;
    width: 124px;
    height: 24px;
    box-sizing: border-box;
    margin: 7px 0 3px;
    padding-left: 7px;
    border: 1px solid var(--line);
    border-left: 2px solid var(--blue);
    border-radius: 3px;
    color: var(--link);
    font-size: 13px;
  }

  .desktop .chip button {
    color: var(--muted);
  }

  .field.notes textarea:is(textarea) {
    flex: 1;
    padding-top: 16px;
    resize: none;
  }

  .phone {
    display: flex;
    gap: 5px;
    position: relative;
  }

  .code {
    flex: 0 0 45px;
  }

  .code .icon {
    right: 0;
  }

  .field .phone > input:not([type='radio']) {
    width: 74px;
  }

  .desktop .call {
    position: absolute;
    top: 18px;
    right: -7px;
    color: #f7a823;
  }

  .field .ext.ext:not([type='radio']) {
    width: 36px;
    margin-top: 6px;
  }

  .phone-field {
    padding-bottom: 23px;
  }

  .link-row {
    position: relative;
  }

  .open-link {
    position: absolute;
    top: 6px;
    right: -16px;
    color: var(--blue);
  }

  .radios label {
    display: flex;
    align-items: center;
    gap: 9px;
    height: 23px;
    font-size: 13px;
  }

  .radios input {
    width: 13px;
    height: 13px;
    margin: 0;
    accent-color: #1f6bf8;
  }

  .stats {
    display: flex;
    align-items: center;
    height: 70px;
    padding: 0 9px;
  }

  .stats a {
    flex: 1 1 0;
    font-size: 13px;
    text-align: center;
  }

  .stats a + a {
    border-left: 1px solid var(--line);
  }

  .stats b {
    display: block;
    padding-bottom: 4px;
    color: var(--text);
    font-size: 16px;
    font-weight: 400;
    line-height: 20px;
  }

  .lead {
    display: flex;
    flex-direction: column;
    padding: 14px 17px 200px 18px;
  }

  .lead-head {
    display: flex;
    align-items: center;
    gap: 9px;
    margin-bottom: 11px;
  }

  .desktop .lead h3 {
    flex: 1;
    font-weight: 600;
  }

  .lead .small-label {
    height: 16px;
    font-size: 11px;
  }

  /* Notes */
  .note {
    padding: 17px 18px 18px;
  }

  .note-head {
    display: flex;
    align-items: center;
    gap: 12px;
  }

  .desktop .add-note {
    width: 80px;
    height: 32px;
    margin-right: auto;
    border: 1px solid var(--blue);
    border-radius: 16px;
    color: var(--link);
    font-size: 13px;
  }

  .note-label {
    display: block;
    padding: 20px 0 10px;
    font-size: 12px;
    font-weight: 600;
  }

  .editor {
    position: relative;
    border: 1px solid var(--line);
    border-radius: 4px;
  }

  .format-bar {
    display: flex;
    align-items: center;
    gap: 14px;
    height: 41px;
    padding-left: 20px;
    border-bottom: 1px solid var(--line);
  }

  .rule {
    width: 1px;
    height: 22px;
    background: var(--line);
  }

  .history {
    margin-right: -6px;
  }

  .editor textarea {
    display: block;
    width: 100%;
    height: 115px;
    padding: 8px;
    border: 0;
    background: none;
    resize: none;
  }

  .grip {
    position: absolute;
    bottom: -3px;
    left: 50%;
    width: 20px;
    height: 3px;
    margin-left: -8px;
    border-radius: 2px;
    background: #bcc3c9;
  }

  .desktop .submit {
    width: 81px;
    height: 32px;
    margin-top: 22px;
    border-radius: 6px;
    background: #d8dde0;
    color: #fff;
  }

  /* Timeline */
  .timeline {
    padding: 16px 17px 80px 18px;
  }

  .timeline-head {
    display: flex;
    align-items: center;
    gap: 12px;
    height: 23px;
    color: var(--blue);
  }

  .desktop .timeline h3 {
    color: var(--text);
    font-weight: 600;
  }

  .desktop .find {
    margin-right: auto;
  }

  .dot {
    position: relative;
  }

  .dot::after {
    content: '';
    position: absolute;
    top: -2px;
    right: -3px;
    width: 8px;
    height: 8px;
    border-radius: 50%;
    background: #3384ff;
  }

  .event {
    display: flex;
    gap: 18px;
    margin-top: 17px;
    font-size: 12px;
  }

  .badge {
    display: flex;
    align-items: center;
    justify-content: center;
    flex: none;
    width: 32px;
    height: 32px;
    box-sizing: border-box;
    border: 1px solid #6f7579;
    border-radius: 50%;
  }

  .teal {
    border-color: #2bb5b4;
    color: #2bb5b4;
  }

  .event-body {
    position: relative;
    flex: 1;
    min-width: 0;
    padding-top: 8px;
  }

  .event-title {
    display: flex;
    gap: 18px;
  }

  .event-title p {
    flex: 1;
    white-space: nowrap;
  }

  .event b,
  dt {
    font-weight: 600;
  }

  time {
    color: var(--muted);
    font-size: 10px;
    font-weight: 600;
  }

  .event-body dl:is(dl) {
    display: grid;
    grid-template-columns: 128px 1fr;
    row-gap: 12px;
    margin-top: 6px;
    padding-bottom: 1px;
    line-height: 14px;
  }

  .desktop .comment {
    position: absolute;
    top: 31px;
    right: 0;
  }

  .desktop .late {
    top: 44px;
  }

  /* Callout */
  .arrow {
    position: absolute;
    top: 213px;
    left: 223px;
  }

  .highlight {
    position: absolute;
    top: 506px;
    left: 413px;
    width: 316px;
    height: 243px;
    box-sizing: border-box;
    border: 4px solid #3fa95f;
    border-radius: 12px;
  }
</style>
